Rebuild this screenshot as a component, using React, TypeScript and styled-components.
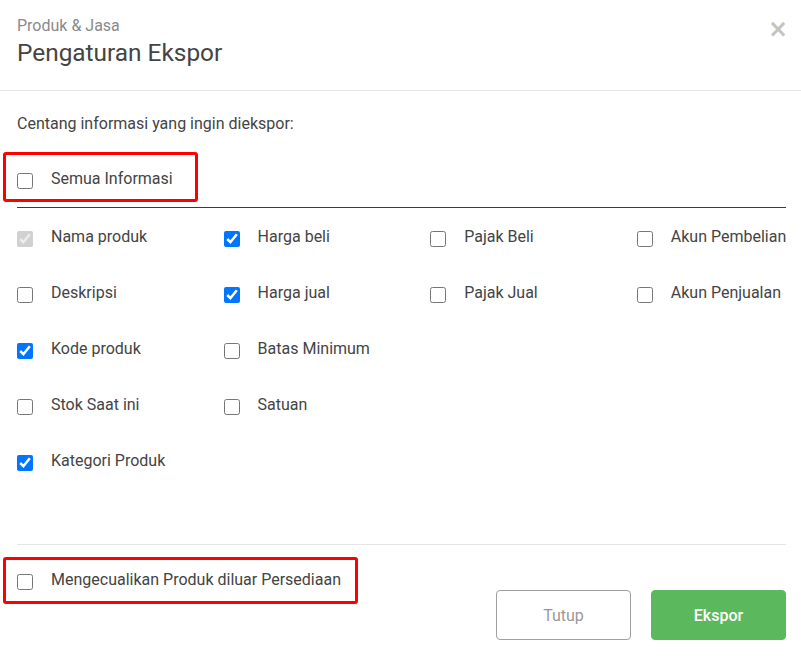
import React from 'react';
import styled, { createGlobalStyle } from 'styled-components';

const GlobalStyle = createGlobalStyle`
  html, body {
    margin: 0;
    padding: 0;
    background: #ffffff;
  }
  body {
    font-family: Roboto, "Liberation Sans", Arial, sans-serif;
    color: #444;
  }
  * {
    box-sizing: border-box;
  }
`;

interface Option {
  label: string;
  checked?: boolean;
  disabled?: boolean;
}

const options: Option[] = [
  { label: 'Nama produk', checked: true, disabled: true },
  { label: 'Harga beli', checked: true },
  { label: 'Pajak Beli' },
  { label: 'Akun Pembelian' },
  { label: 'Deskripsi' },
  { label: 'Harga jual', checked: true },
  { label: 'Pajak Jual' },
  { label: 'Akun Penjualan' },
  { label: 'Kode produk', checked: true },
  { label: 'Batas Minimum' },
  { label: '' },
  { label: '' },
  { label: 'Stok Saat ini' },
  { label: 'Satuan' },
  { label: '' },
  { label: '' },
  { label: 'Kategori Produk', checked: true },
];

const CheckItem: React.FC<Option> = ({ label, checked, disabled }) => (
  <ItemLabel>
    <Box type="checkbox" defaultChecked={checked} disabled={disabled} />
    <ItemText>{label}</ItemText>
  </ItemLabel>
);

const App: React.FC = () => {
  return (
    <>
      <GlobalStyle />
      <Modal>
        <Header>
          <HeaderTitles>
            <SubTitle>Produk &amp; Jasa</SubTitle>
            <Title>Pengaturan Ekspor</Title>
          </HeaderTitles>
          <CloseButton aria-label="close">×</CloseButton>
        </Header>
        <Body>
          <Intro>Centang informasi yang ingin diekspor:</Intro>
          <Highlight>
            <CheckItem label="Semua Informasi" />
          </Highlight>
          <Divider />
          <OptionGrid>
            {options.map((o, i) =>
              o.label ? <CheckItem key={i} {...o} /> : <span key={i} />
            )}
          </OptionGrid>
        </Body>
        <Footer>
          <Highlight>
            <CheckItem label="Mengecualikan Produk diluar Persediaan" />
          </Highlight>
          <Actions>
            <Button>Tutup</Button>
            <Button primary>Ekspor</Button>
          </Actions>
        </Footer>
      </Modal>
    </>
  );
};

export default App;

const Modal = styled.div`
  width: 801px;
  height: 659px;
  background: #fff;
  overflow: hidden;
`;

const Header = styled.div`
  display: flex;
  justify-content: space-between;
  align-items: flex-start;
  height: 91px;
  padding: 16px 13px 0 17px;
  border-bottom: 1px solid #e6e6e6;
`;

const HeaderTitles = styled.div`
  display: flex;
  flex-direction: column;
`;

const SubTitle = styled.div`
  font-size: 16px;
  line-height: 19px;
  color: #8a8a8a;
`;

const Title = styled.h1`
  margin: 3px 0 0;
  font-size: 24.4px;
  line-height: 30px;
  font-weight: 400;
  color: #444;
`;

const CloseButton = styled.button`
  border: none;
  background: none;
  padding: 0;
  margin-top: 1px;
  font-family: "DejaVu Sans", sans-serif;
  font-size: 24px;
  line-height: 24px;
  font-weight: 700;
  color: #c4c4c4;
  cursor: pointer;
`;

const Body = styled.div`
  padding: 24px 15px 0 17px;
`;

const Intro = styled.p`
  margin: 0;
  font-size: 16px;
  line-height: 18px;
  color: #444;
`;

const Highlight = styled.div`
  display: inline-flex;
  align-items: flex-start;
  margin: 19px 0 0 -14px;
  padding: 12px 22px 8px 11px;
  border: 3px solid #ff0000;
  border-radius: 3px;
`;

const Divider = styled.div`
  margin-top: 5px;
  height: 1px;
  background: #3a3a3a;
`;

const OptionGrid = styled.div`
  display: grid;
  grid-template-columns: repeat(4, 206.6px);
  grid-auto-rows: 24px;
  row-gap: 32px;
  margin-top: 17px;
`;

const ItemLabel = styled.label`
  display: flex;
  align-items: flex-start;
  gap: 18px;
  white-space: nowrap;
  cursor: pointer;
`;

const Box = styled.input`
  flex: none;
  width: 16px;
  height: 16px;
  margin: 6px 0 0;
`;

const ItemText = styled.span`
  font-size: 16px;
  line-height: 24px;
  color: #444;
`;

const Footer = styled.div`
  display: flex;
  justify-content: space-between;
  align-items: flex-start;
  margin: 71px 15px 0 17px;
  border-top: 1px solid #e6e6e6;

  ${Highlight} {
    margin-top: 12px;
    padding: 8px 14px 9px 11px;
  }
`;

const Actions = styled.div`
  display: flex;
  gap: 20px;
  margin-top: 45px;
`;

const Button = styled.button<{ primary?: boolean }>`
  width: 135px;
  height: 50px;
  border-radius: 4px;
  font-family: Roboto, "Liberation Sans", Arial, sans-serif;
  font-size: 16px;
  font-weight: ${({ primary }) => (primary ? 500 : 400)};
  color: ${({ primary }) => (primary ? '#fff' : '#999')};
  background: ${({ primary }) => (primary ? '#5cb85c' : '#fff')};
  border: 1px solid ${({ primary }) => (primary ? '#5cb85c' : '#a0a0a0')};
  cursor: pointer;
`;
